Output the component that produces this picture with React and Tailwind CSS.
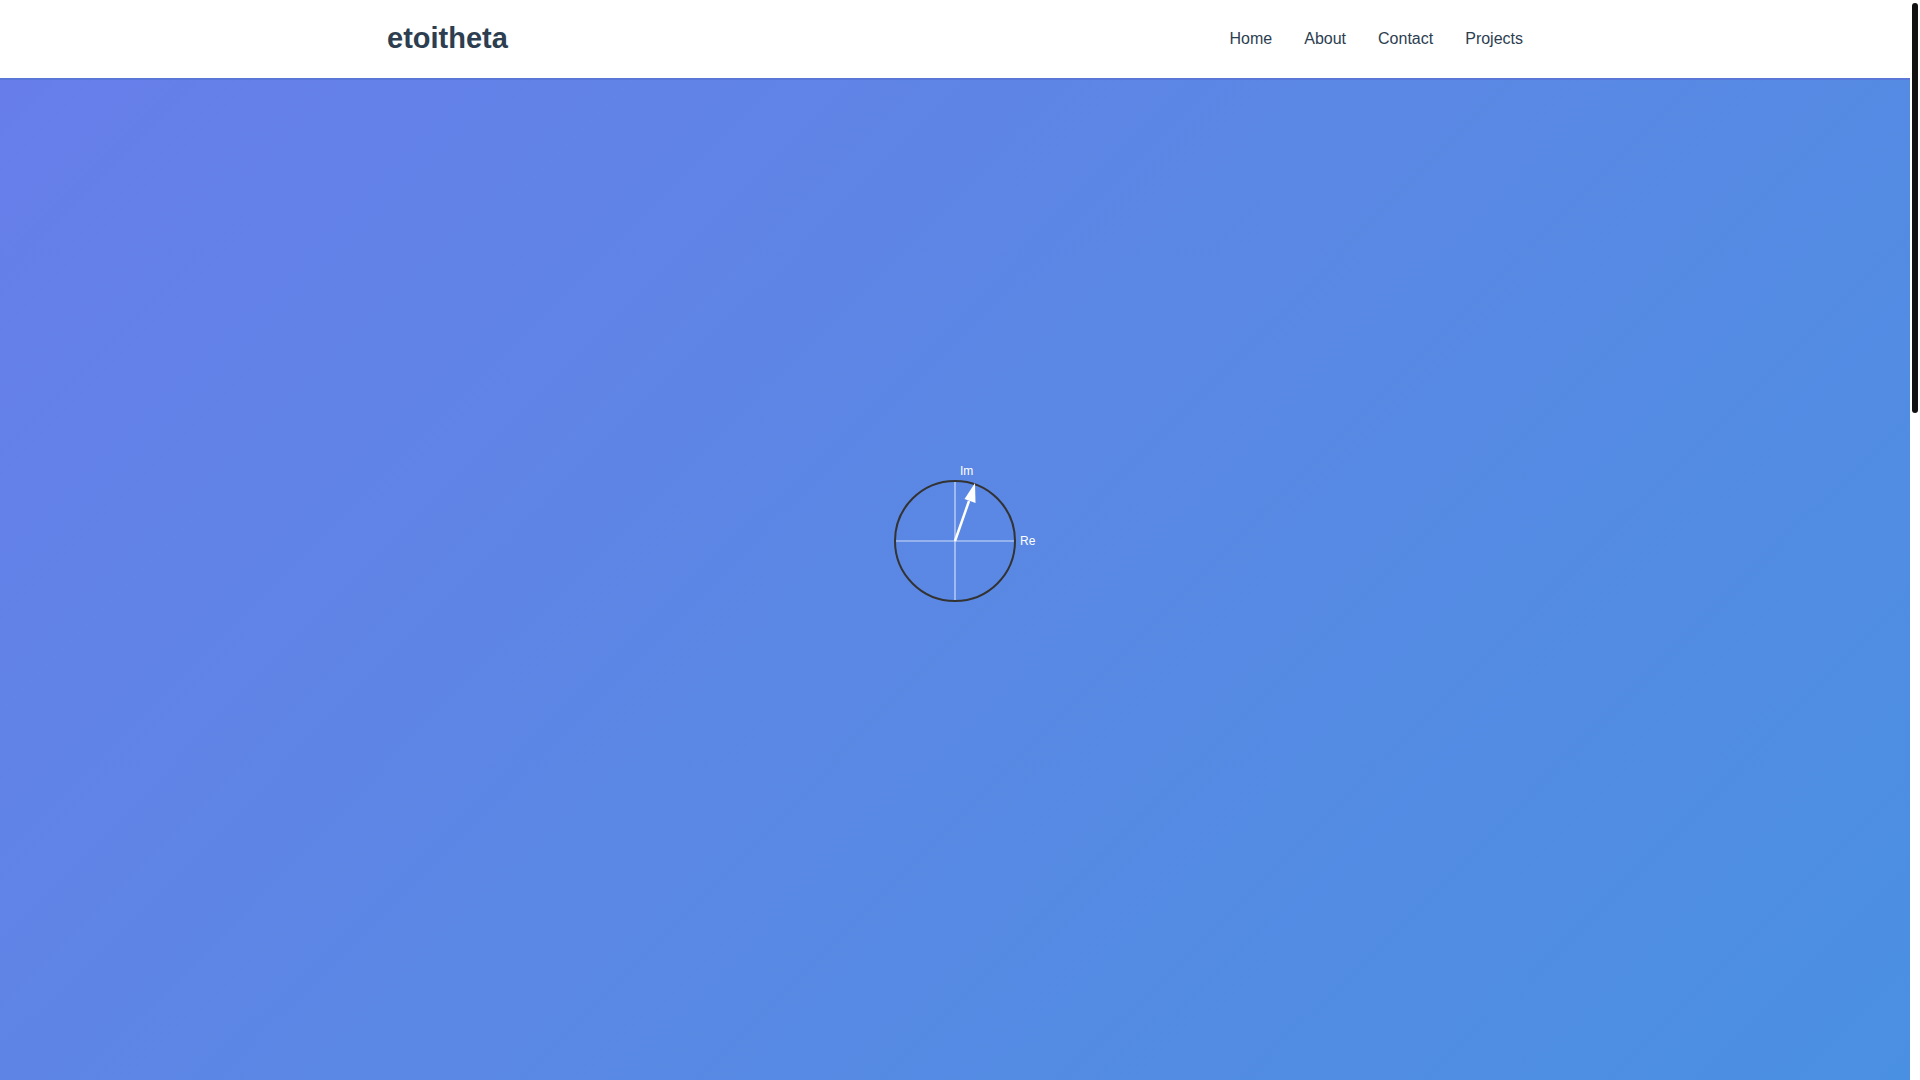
export default function App() {
  return (
    <div className="flex h-[1080px] w-full overflow-hidden bg-white" style={{ fontFamily: '"Liberation Sans", Arial, sans-serif' }}>
      <div className="flex flex-1 flex-col">
        <header className="h-[80px] border-b-2 border-[#5a78d8] bg-white">
          <div className="mx-auto flex h-full max-w-[1200px] items-center justify-between px-8">
            <div className="text-[29px] font-bold text-[#2c3e50]">etoitheta</div>
            <nav className="flex gap-8 text-[16px] text-[#2c3e50]">
              <span>Home</span>
              <span>About</span>
              <span>Contact</span>
              <span>Projects</span>
            </nav>
          </div>
        </header>
        <main className="flex flex-1 flex-col items-center bg-[linear-gradient(135deg,#677eea_0%,#5a88e4_50%,#4a90e2_100%)] pt-[361px]">
          <svg width="200" height="200" viewBox="0 0 200 200">
            <line x1="40" y1="100" x2="160" y2="100" stroke="rgba(255,255,255,0.7)" strokeWidth="1.2" />
            <line x1="100" y1="40" x2="100" y2="160" stroke="rgba(255,255,255,0.7)" strokeWidth="1.2" />
            <circle cx="100" cy="100" r="60" fill="none" stroke="#333" strokeWidth="2" />
            <line x1="100" y1="100" x2="114" y2="60" stroke="white" strokeWidth="2.5" />
            <polygon points="120,42 120.5,62 109.5,58" fill="white" />
            <text x="105" y="34" fill="white" fontSize="12" fontFamily="Liberation Sans, Arial, sans-serif">Im</text>
            <text x="165" y="104" fill="white" fontSize="12" fontFamily="Liberation Sans, Arial, sans-serif">Re</text>
          </svg>
        </main>
      </div>
      <div className="flex w-[10px] flex-col bg-white pt-[3px]">
        <div className="ml-[2px] h-[410px] w-[6px] rounded-full bg-[#111]" />
      </div>
    </div>
  );
}
